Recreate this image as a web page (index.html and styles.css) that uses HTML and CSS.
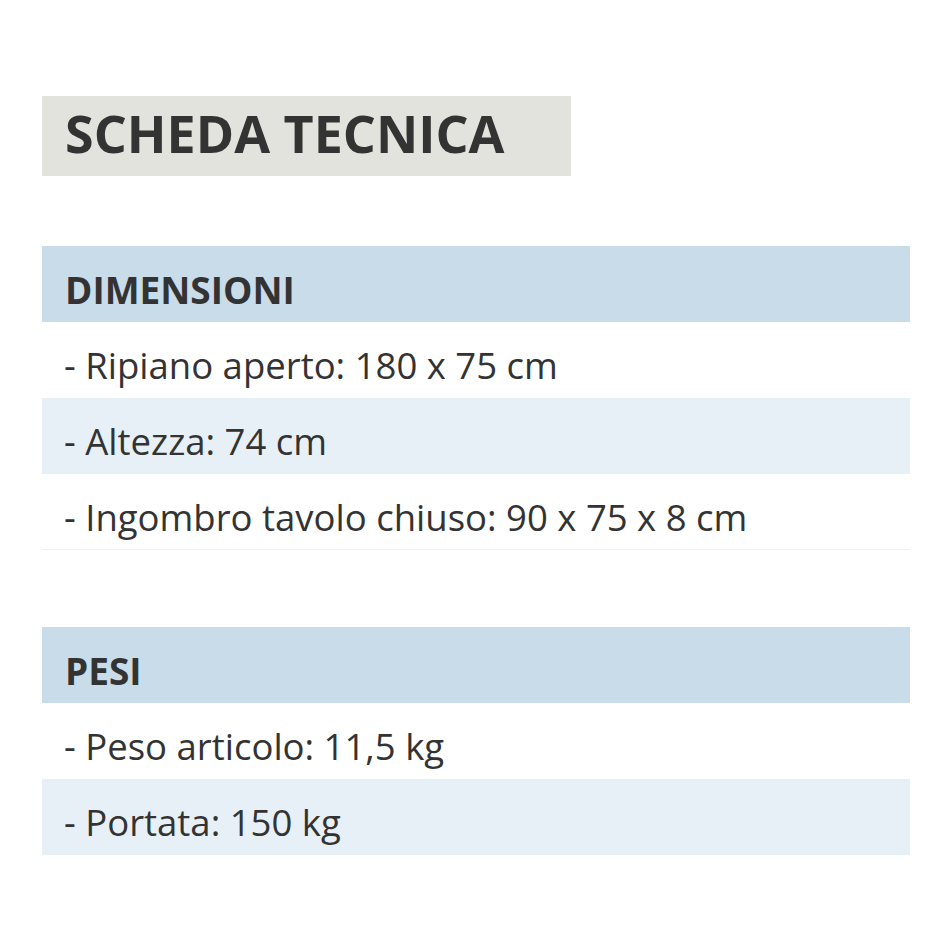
FILE: index.html
```html
<!DOCTYPE html>
<html lang="it">
<head>
<meta charset="utf-8">
<title>Scheda tecnica</title>
<link rel="stylesheet" href="styles.css">
</head>
<body>
<main class="sheet">
  <h1 class="title">SCHEDA TECNICA</h1>
  <section class="group">
    <h2 class="group-head">DIMENSIONI</h2>
    <div class="row">- Ripiano aperto: 180 x 75 cm</div>
    <div class="row alt">- Altezza: 74 cm</div>
    <div class="row last">- Ingombro tavolo chiuso: 90 x 75 x 8 cm</div>
  </section>
  <section class="group">
    <h2 class="group-head">PESI</h2>
    <div class="row">- Peso articolo: 11,5 kg</div>
    <div class="row alt">- Portata: 150 kg</div>
  </section>
</main>
</body>
</html>
```
FILE: styles.css
```css
html, body {
  margin: 0;
  padding: 0;
  background: #ffffff;
}
body {
  font-family: "Open Sans", "Noto Sans", sans-serif;
  color: #333333;
}
.sheet {
  width: 868px;
  padding: 96px 0 0 42px;
  display: flex;
  flex-direction: column;
}
.title {
  margin: 0;
  width: 529px;
  height: 80px;
  box-sizing: border-box;
  padding: 0 0 8px 23px;
  display: flex;
  align-items: center;
  background: #e3e3dd;
  font-size: 52px;
  font-weight: 700;
  color: #333333;
}
.group {
  margin-top: 70px;
  display: flex;
  flex-direction: column;
}
.group + .group {
  margin-top: 77px;
}
.group-head {
  margin: 0;
  height: 76px;
  box-sizing: border-box;
  padding: 10px 0 0 23px;
  display: flex;
  align-items: center;
  background: #c9dcea;
  font-size: 37px;
  font-weight: 700;
  color: #333333;
}
.row {
  height: 76px;
  box-sizing: border-box;
  padding: 10px 0 0 22px;
  display: flex;
  align-items: center;
  font-size: 36.5px;
  color: #333333;
}
.row.alt {
  background: #e8f0f7;
}
.row.last {
  border-bottom: 1px solid #eef2f4;
}
```
